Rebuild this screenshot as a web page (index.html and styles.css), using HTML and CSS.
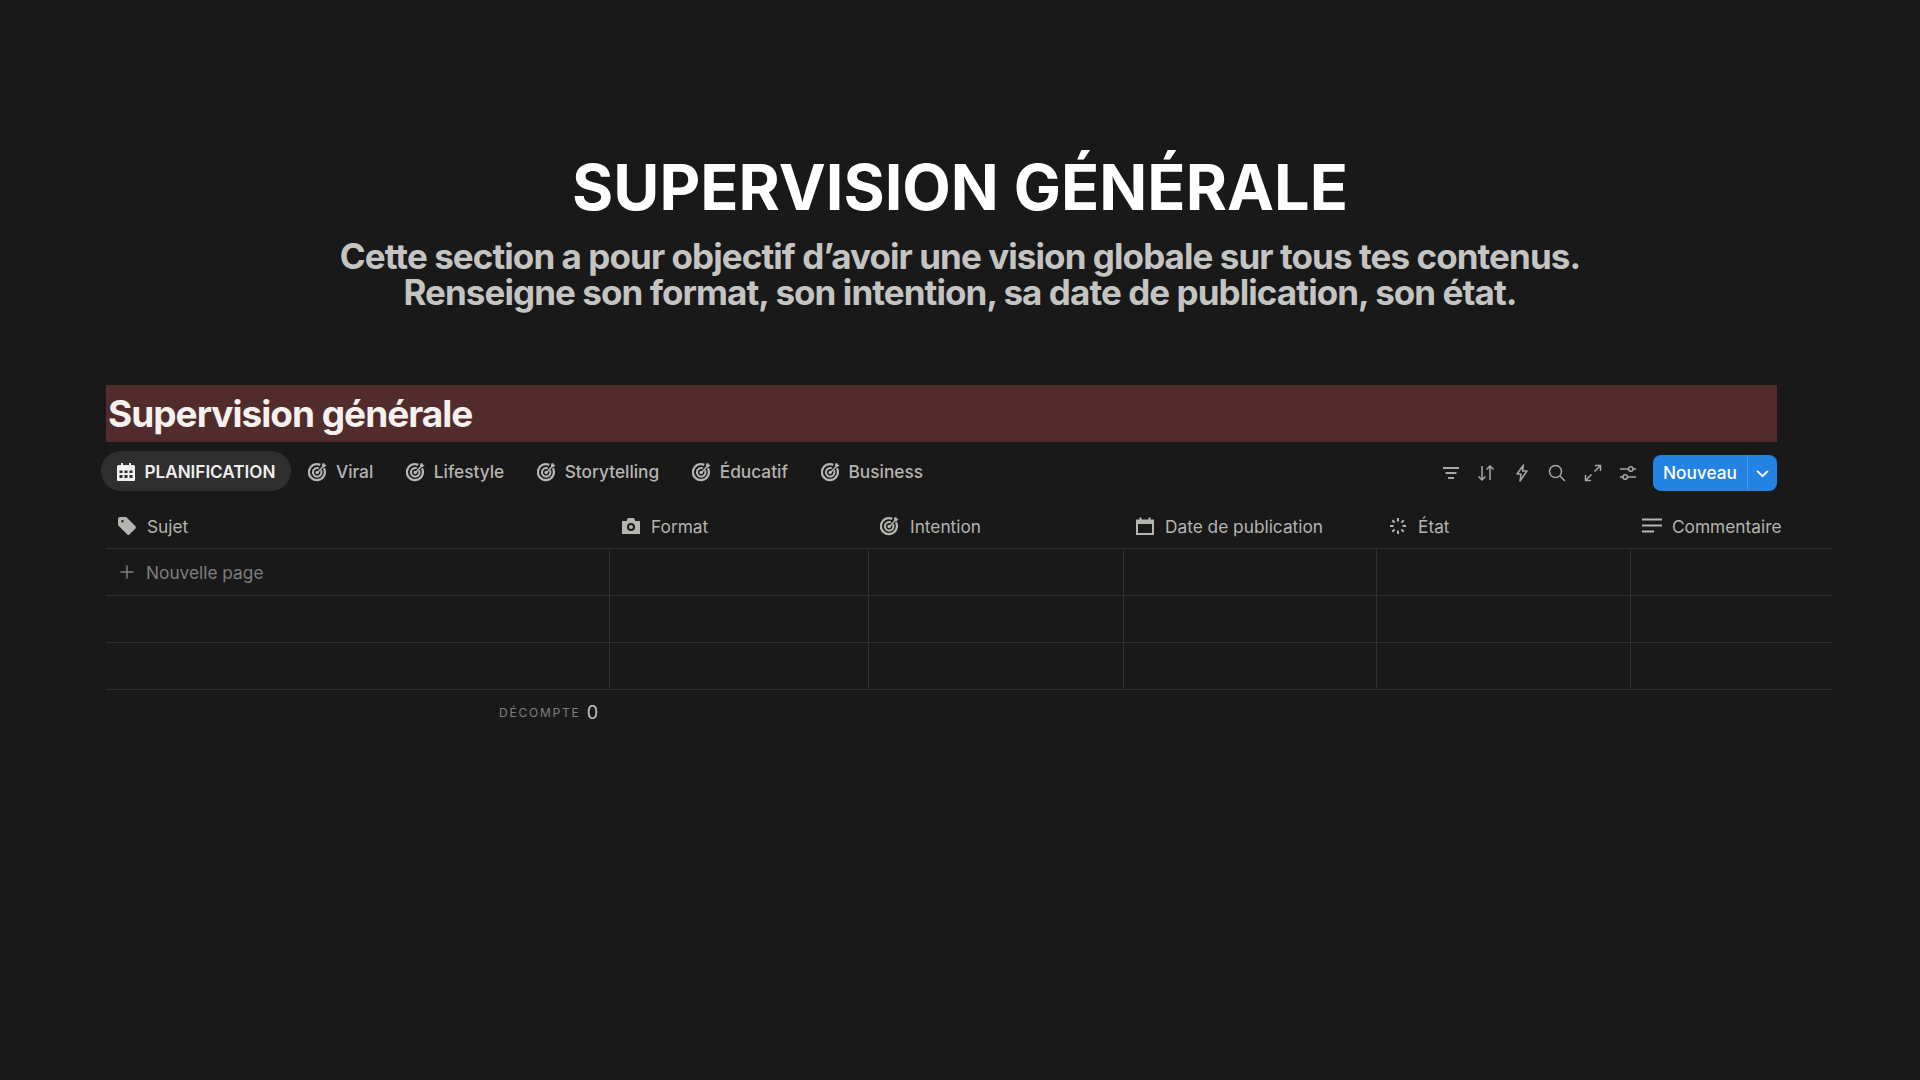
FILE: index.html
```html
<!DOCTYPE html>
<html lang="fr">
<head>
    <meta charset="UTF-8">
    <title>Supervision générale</title>
    <link rel="stylesheet" href="styles.css">
</head>
<body>
    <svg class="defs" width="0" height="0">
        <symbol id="target" viewBox="0 0 20 20">
            <path d="M15.900 6.300A8 8 0 1 1 12.300 2.900" fill="none" stroke="currentColor" stroke-width="2.300"/>
            <path d="M13 8.300A4.300 4.300 0 1 1 10.800 6.300" fill="none" stroke="currentColor" stroke-width="2.100"/>
            <circle cx="9.200" cy="10.500" r="1.800" fill="currentColor"/>
            <path d="M9.500 10.500 15.500 4" stroke="currentColor" stroke-width="1.500"/>
            <path d="M14.500 1.200h2l.4 1.500 1.800.4-2.200 2.200-2.300-.3-.2-1.900z" fill="currentColor"/>
        </symbol>
    </svg>

    <div class="intro">
        <h1>SUPERVISION GÉNÉRALE</h1>
        <p>Cette section a pour objectif d’avoir une vision globale sur tous tes contenus.<br>Renseigne son format, son intention, sa date de publication, son état.</p>
    </div>

    <div class="board">
        <h2 class="banner">Supervision générale</h2>

        <div class="toolbar">
            <div class="tabs">
                <div class="tab active">
                    <svg class="icon" viewBox="0 0 20 20"><path d="M1 4.500A1.500 1.500 0 0 1 2.500 3H5V1h2v2h6V1h2v2h2.500A1.500 1.500 0 0 1 19 4.500V18a1 1 0 0 1-1 1H2a1 1 0 0 1-1-1z" fill="currentColor"/><path d="M3.500 8.500h3v2.500h-3zM8.500 8.500h3v2.500h-3zM13.500 8.500h3v2.500h-3zM3.500 13h3v3h-3zM8.500 13h3v3h-3zM13.500 13h3v3h-3z" fill="#2f2f2f"/></svg>
                    PLANIFICATION
                </div>
                <div class="tab"><svg class="icon"><use href="#target"/></svg>Viral</div>
                <div class="tab"><svg class="icon"><use href="#target"/></svg>Lifestyle</div>
                <div class="tab"><svg class="icon"><use href="#target"/></svg>Storytelling</div>
                <div class="tab"><svg class="icon"><use href="#target"/></svg>Éducatif</div>
                <div class="tab"><svg class="icon"><use href="#target"/></svg>Business</div>
            </div>
            <div class="actions">
                <svg class="tool" viewBox="0 0 20 20"><path d="M2 5h16M4.500 10h11M7 15h6" stroke-width="1.800"/></svg>
                <svg class="tool" viewBox="0 0 20 20"><path d="M6 3v14M2.500 13.500 6 17l3.500-3.500M14 17V3M10.500 6.500 14 3l3.500 3.500"/></svg>
                <svg class="tool" viewBox="0 0 20 20"><path d="M11.500 2 5 11h4l-1 7 7-10h-4.500z" stroke-linejoin="round"/></svg>
                <svg class="tool" viewBox="0 0 20 20"><circle cx="8.500" cy="8.500" r="6"/><path d="m13 13 5 5"/></svg>
                <svg class="tool" viewBox="0 0 20 20"><path d="M11.500 8.500 17.500 2.500M12 2.500h5.500V8M8.500 11.500l-6 6M2.500 12v5.500H8"/></svg>
                <svg class="tool" viewBox="0 0 20 20"><path d="M2 6h8.500M15 6h3M2 14h3M9.500 14H18"/><circle cx="12.800" cy="6" r="2.200"/><circle cx="7.200" cy="14" r="2.200"/></svg>
                <div class="new-btn">
                    <span class="new-label">Nouveau</span>
                    <span class="new-arrow"><svg viewBox="0 0 14 14"><path d="m2 4.500 5 5 5-5"/></svg></span>
                </div>
            </div>
        </div>

        <div class="table">
            <div class="row head">
                <div class="cell">
                    <svg class="icon" viewBox="0 0 20 20"><path fill-rule="evenodd" d="M1 3a2 2 0 0 1 2-2h6.200l9.300 9.300a1.500 1.500 0 0 1 0 2.100l-6.100 6.100a1.500 1.500 0 0 1-2.100 0L1 9.200zm4.500 3.400a1.200 1.200 0 1 0 0-2.400 1.200 1.200 0 0 0 0 2.400z" fill="currentColor"/></svg>
                    Sujet
                </div>
                <div class="cell">
                    <svg class="icon" viewBox="0 0 20 20"><path fill-rule="evenodd" d="M1 5h4.500l1.500-3h6l1.500 3H19v13H1zm9 10a4 4 0 1 0 0-8 4 4 0 0 0 0 8zm0-2a2 2 0 1 1 0-4 2 2 0 0 1 0 4z" fill="currentColor"/></svg>
                    Format
                </div>
                <div class="cell"><svg class="icon"><use href="#target"/></svg>Intention</div>
                <div class="cell">
                    <svg class="icon" viewBox="0 0 20 20"><path fill-rule="evenodd" d="M1 3.500h3.500V1.500h2v2h7v-2h2v2H19V19H1zM3 8v9h14V8z" fill="currentColor"/></svg>
                    Date de publication
                </div>
                <div class="cell">
                    <svg class="icon" viewBox="0 0 20 20"><path d="M10 2v3.500M10 14.500V18M2 10h3.500M14.500 10H18M4.300 4.300l2.300 2.300M13.400 13.400l2.300 2.300M4.300 15.700l2.300-2.300M13.400 6.600l2.300-2.300" stroke="currentColor" stroke-width="2"/></svg>
                    État
                </div>
                <div class="cell">
                    <svg class="icon" viewBox="0 0 20 20"><path d="M0 3.500h20M0 9.500h20M0 15.500h12" stroke="currentColor" stroke-width="2"/></svg>
                    Commentaire
                </div>
            </div>
            <div class="row">
                <div class="cell add">
                    <svg class="plus" viewBox="0 0 14 14"><path d="M7 .5v13M.5 7h13"/></svg>
                    Nouvelle page
                </div>
                <div class="cell"></div><div class="cell"></div><div class="cell"></div><div class="cell"></div><div class="cell"></div>
            </div>
            <div class="row">
                <div class="cell"></div><div class="cell"></div><div class="cell"></div><div class="cell"></div><div class="cell"></div><div class="cell"></div>
            </div>
            <div class="row">
                <div class="cell"></div><div class="cell"></div><div class="cell"></div><div class="cell"></div><div class="cell"></div><div class="cell"></div>
            </div>
        </div>

        <div class="count">
            <span class="count-label">DÉCOMPTE</span>
            <span class="count-value">0</span>
        </div>
    </div>
</body>
</html>
```

FILE: styles.css
```css
* {
    box-sizing: border-box;
}

body {
    margin: 0;
    height: 1080px;
    overflow: hidden;
    background-color: #191919;
    font-family: Inter, "Liberation Sans", sans-serif;
    color: #fff;
}

.defs {
    position: absolute;
}

/* titre */
.intro {
    padding-top: 151px;
    text-align: center;
}

.intro h1 {
    margin: 0;
    font-size: 63px;
    line-height: 72px;
    font-weight: 700;
}

.intro p {
    margin: 15px 0 0;
    font-size: 35px;
    line-height: 36px;
    font-weight: 700;
    letter-spacing: -0.930px;
    color: #c4c4c2;
}

.board {
    padding: 75px 88px 0 106px;
}

.banner {
    width: 1671px;
    height: 57px;
    margin: 0;
    padding: 1px 0 0 2px;
    background-color: #522c2c;
    font-size: 37px;
    line-height: 55px;
    font-weight: 700;
    letter-spacing: -1px;
    color: #f5f1ef;
}

/* onglets + actions */
.toolbar {
    display: flex;
    justify-content: space-between;
    align-items: center;
    width: 1671px;
    height: 40px;
    margin-top: 9px;
}

.tabs {
    display: flex;
    align-items: center;
    margin-left: -5px;
}

.tab {
    display: flex;
    align-items: center;
    gap: 7.500px;
    height: 40px;
    padding: 1px 15px 0;
    margin-right: 3px;
    border-radius: 20px;
    font-size: 17.300px;
    font-weight: 500;
    color: #b5b4b0;
}

.tab.active {
    gap: 8.500px;
    padding-right: 16px;
    background-color: #2f2f2f;
    font-weight: 600;
    font-size: 17.100px;
    color: #f0f0ee;
    margin-right: 2px;
}

.icon {
    display: block;
    flex: none;
    width: 20px;
    height: 20px;
    color: #b5b4b0;
}

.tab.active .icon {
    color: #f0f0ee;
}

.actions {
    display: flex;
    align-items: center;
    gap: 15.500px;
    margin-top: 4px;
}

.tool {
    width: 20px;
    height: 20px;
    fill: none;
    stroke: #a8a7a3;
    stroke-width: 1.500;
}

.new-btn {
    display: flex;
    height: 36px;
    margin-left: -1px;
    border-radius: 8px;
    overflow: hidden;
    background-color: #2383e2;
    font-size: 17.300px;
    font-weight: 500;
}

.new-label {
    padding: 0 10px;
    line-height: 36px;
    border-right: 1px solid #4a98e6;
}

.new-arrow {
    display: flex;
    align-items: center;
    justify-content: center;
    width: 29px;
}

.new-arrow svg {
    width: 15px;
    height: 15px;
    fill: none;
    stroke: #fff;
    stroke-width: 1.800;
}

/* tableau */
.table {
    width: 1726px;
    margin-top: 10px;
}

.row {
    display: grid;
    grid-template-columns: 504px 259px 255px 253px 254px 201px;
    height: 47px;
    border-bottom: 1px solid #2f2f2f;
}

.row.head {
    height: 48px;
    padding-top: 3px;
}

.cell {
    display: flex;
    align-items: center;
    gap: 10px;
    padding-left: 10px;
    border-right: 1px solid #2f2f2f;
    font-size: 17.300px;
    color: #b5b4b0;
}

.cell:last-child {
    border-right: none;
}

.row.head .cell {
    border-right: none;
    padding-left: 11px;
}

.row .cell.add {
    gap: 12px;
    padding-left: 14px;
    color: #7f7f7f;
}

.plus {
    width: 14px;
    height: 14px;
    fill: none;
    stroke: #7f7f7f;
    stroke-width: 1.500;
}

/* bas du tableau */
.count {
    display: flex;
    align-items: center;
    justify-content: flex-end;
    gap: 6px;
    width: 492px;
    height: 44px;
    padding-top: 1px;
}

.count-label {
    font-size: 12px;
    letter-spacing: 1.800px;
    color: #7f7f7f;
}

.count-value {
    font-size: 18px;
    color: #c4c4c2;
}
```
